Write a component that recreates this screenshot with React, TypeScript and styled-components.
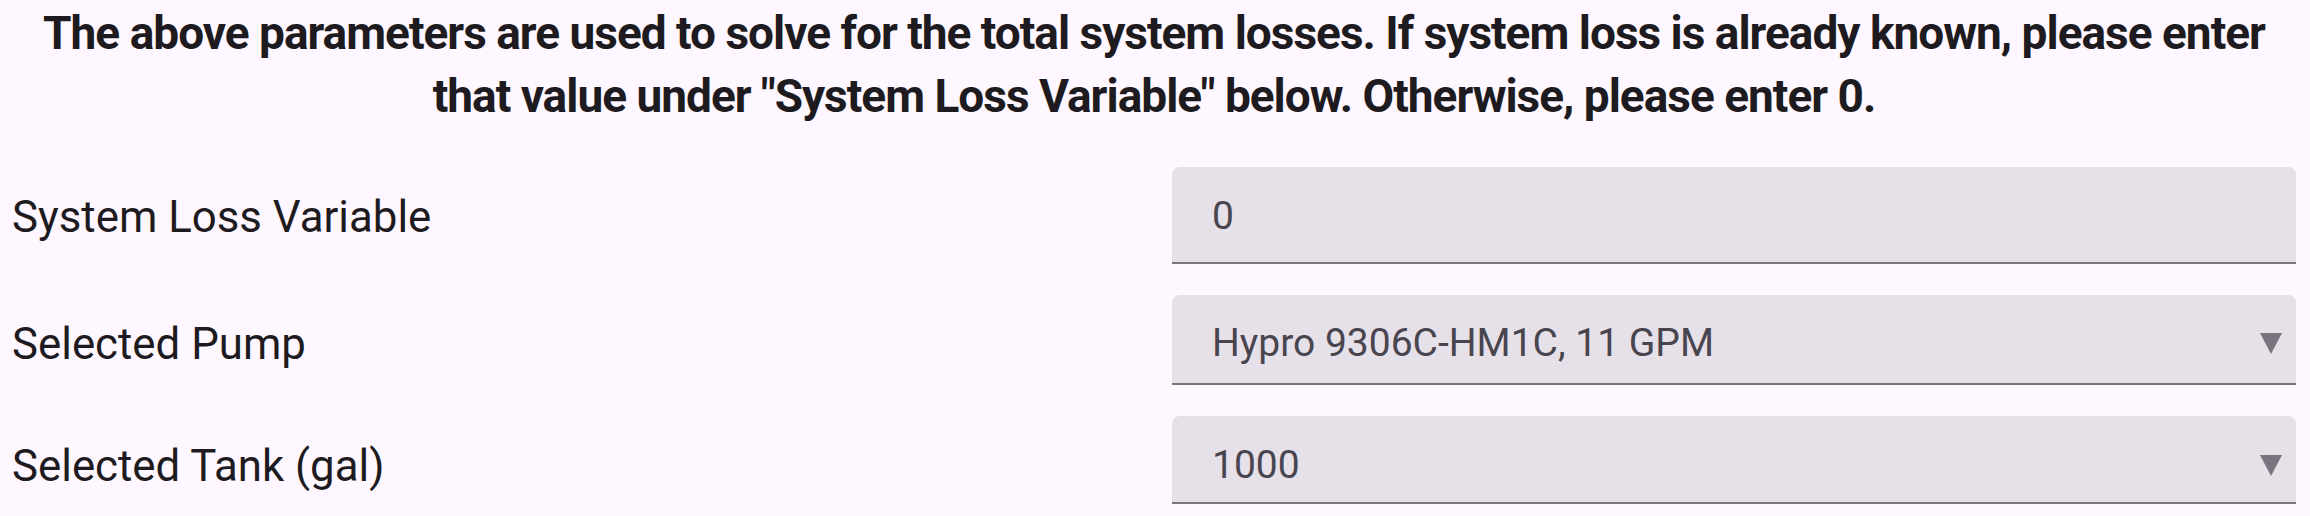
import styled, { createGlobalStyle } from "styled-components";

const GlobalStyle = createGlobalStyle`
    html, body {
        margin: 0;
        padding: 0;
        background-color: #fef7ff;
    }
    body {
        font-family: Roboto, "Liberation Sans", sans-serif;
        color: #1d1b20;
    }
`;

type FieldRow = {
    label: string;
    value: string;
    select: boolean;
    height: number;
    nudge: number;
};

const rows: FieldRow[] = [
    {label: "System Loss Variable", value: "0", select: false, height: 97, nudge: 3},
    {label: "Selected Pump", value: "Hypro 9306C-HM1C, 11 GPM", select: true, height: 90, nudge: 8},
    {label: "Selected Tank (gal)", value: "1000", select: true, height: 88, nudge: 12},
];

export default function App() {
    return <>
        <GlobalStyle/>
        <Page>
            <Intro>
                The above parameters are used to solve for the total system losses. If system loss is already
                known, please enter that value under "System Loss Variable" below. Otherwise, please enter 0.
            </Intro>
            <Form>
                {rows.map((row) => <Row key={row.label}>
                    <Label $nudge={row.nudge}>{row.label}</Label>
                    <Field $height={row.height} $nudge={row.nudge}>
                        <FieldValue>{row.value}</FieldValue>
                        {row.select && <Arrow viewBox="0 0 22 21">
                            <polygon points="0,0 22,0 11,21" fill="#79747e"/>
                        </Arrow>}
                    </Field>
                </Row>)}
            </Form>
        </Page>
    </>;
}

const Page = styled.div`
    box-sizing: border-box;
    width: 100%;
    padding: 0 14px 0 12px;
`;

const Intro = styled.p`
    margin: 2px 0 0;
    text-align: center;
    font-size: 46px;
    font-weight: 700;
    line-height: 63px;
    letter-spacing: -1px;
    color: #1d1b20;
`;

const Form = styled.div`
    display: flex;
    flex-direction: column;
    gap: 31px;
    margin-top: 39px;
`;

const Row = styled.div`
    display: grid;
    grid-template-columns: 1fr 1124px;
    align-items: center;
`;

const Label = styled.span<{ $nudge: number }>`
    margin-top: ${(p) => p.$nudge}px;
    font-size: 43.8px;
    color: #1d1b20;
`;

const Field = styled.div<{ $height: number; $nudge: number }>`
    box-sizing: border-box;
    height: ${(p) => p.$height}px;

    display: flex;
    flex-direction: row;
    justify-content: space-between;
    align-items: center;

    padding: ${(p) => p.$nudge}px 14px 0 40px;
    background-color: #e6e0e9;
    border-radius: 8px 8px 0 0;
    border-bottom: 2px solid #79747e;
`;

const FieldValue = styled.span`
    font-size: 39px;
    color: #49454f;
`;

const Arrow = styled.svg`
    width: 22px;
    height: 21px;
`;
